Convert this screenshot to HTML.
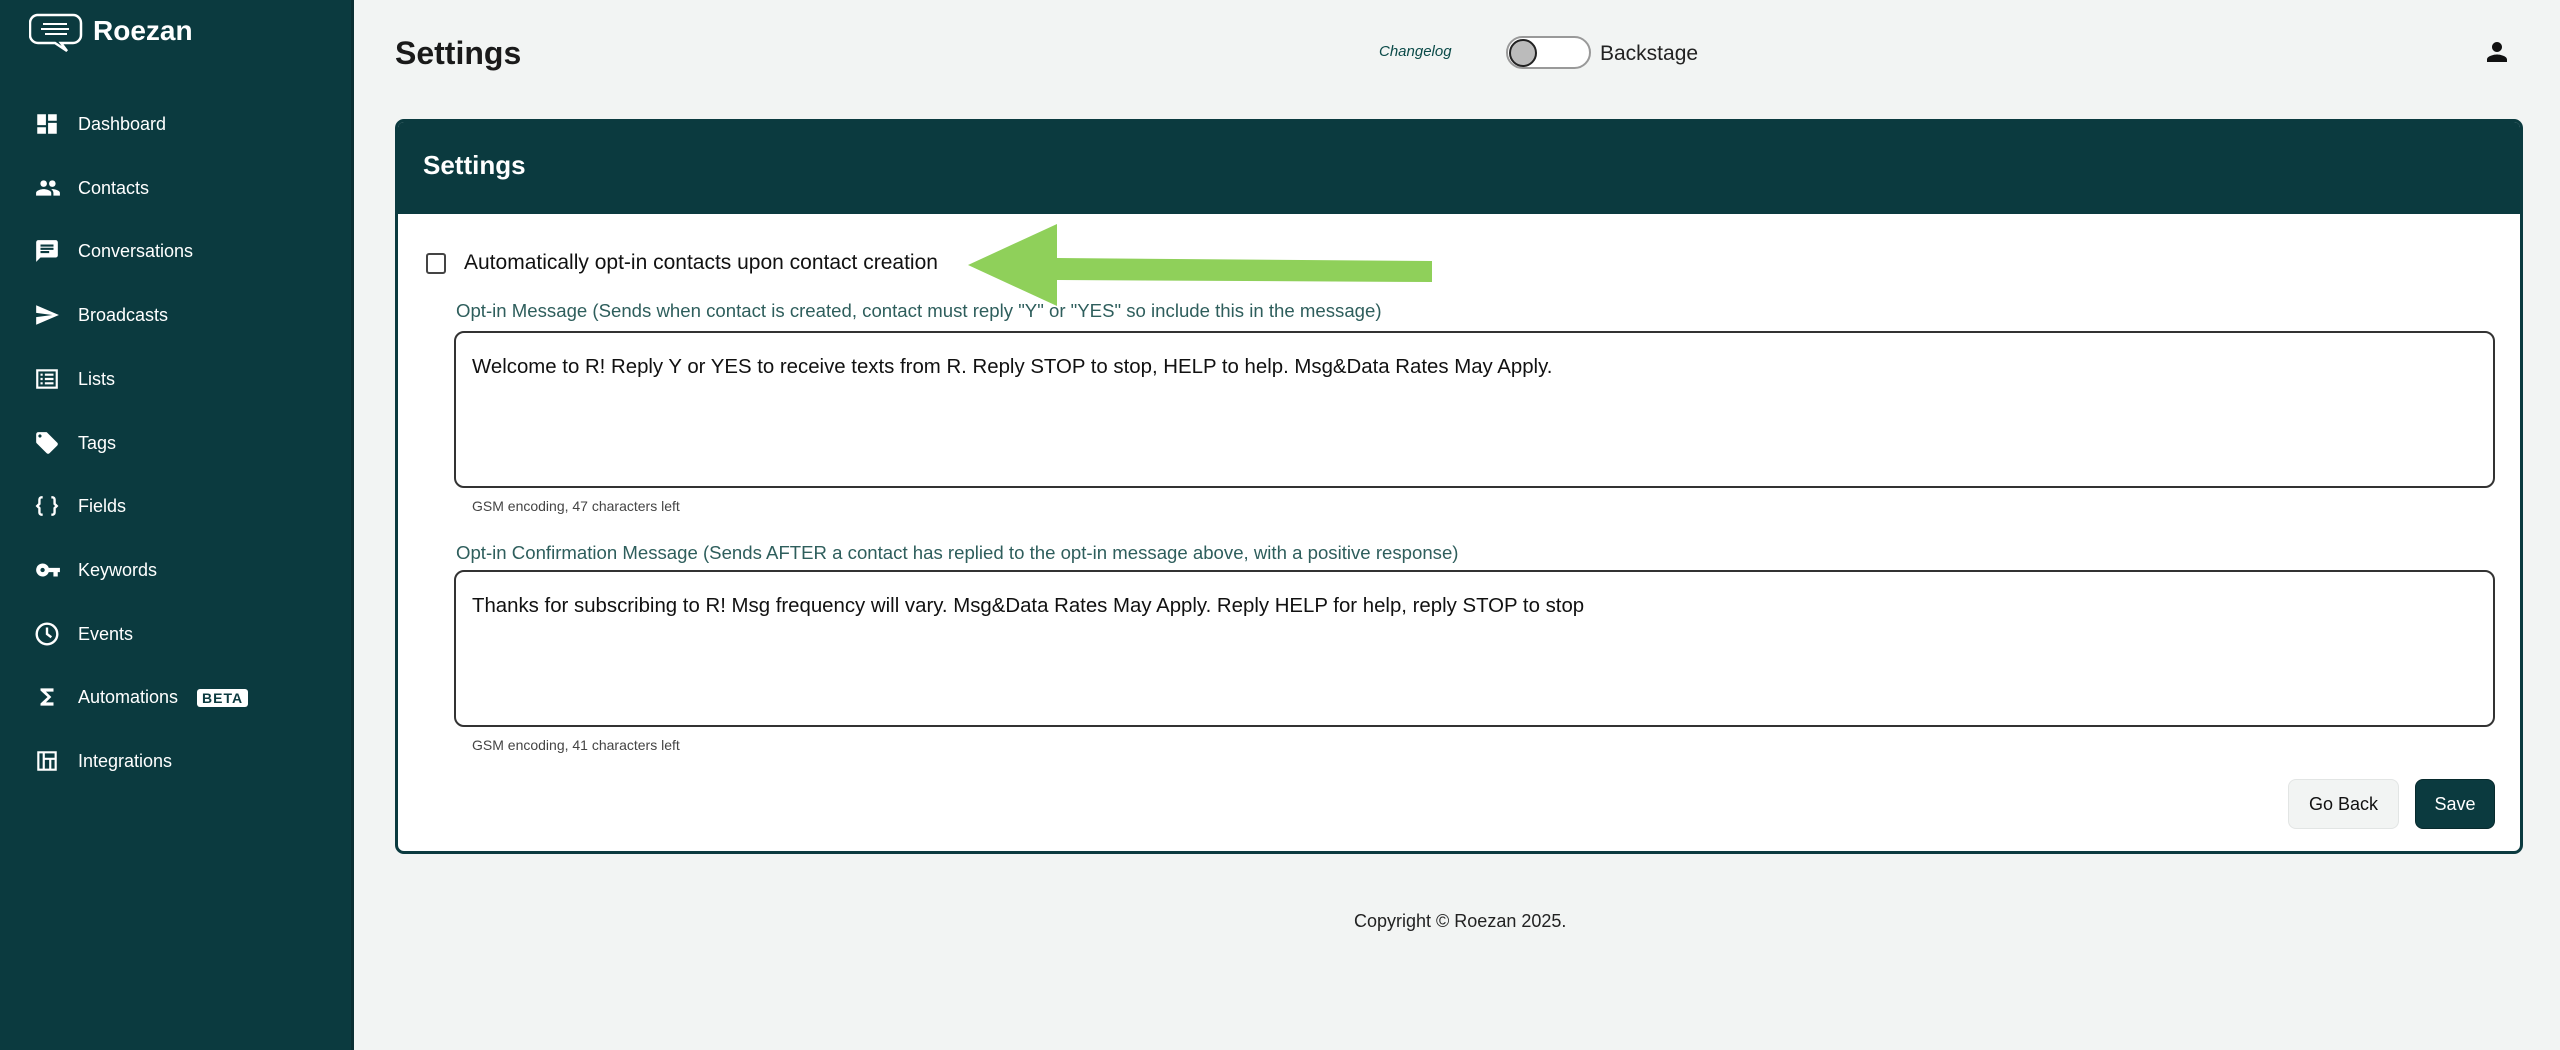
<!DOCTYPE html>
<html><head><meta charset="utf-8"><style>
*{box-sizing:border-box;margin:0;padding:0}
body{width:2560px;height:1050px;background:#f2f4f3;font-family:"Liberation Sans",sans-serif;position:relative;overflow:hidden;color:#111}
.sb{position:absolute;left:0;top:0;width:354px;height:1050px;background:#0b3a3f;border-right:3px solid #0a2f33}
.abs{position:absolute}
.nav{position:absolute;left:0;width:354px;height:40px;color:#fff;font-size:18px}
.nav svg{position:absolute;left:34px;top:7px}
.nav span{position:absolute;left:78px;top:10px}
.card{position:absolute;left:395px;top:119px;width:2128px;height:735px;border:3px solid #0b3a3f;border-radius:9px;background:#fff;overflow:hidden}
.ch{height:92px;background:#0b3a3f;color:#fff;font-size:26px;font-weight:bold;padding:28px 0 0 25px}
.ta{position:absolute;left:454px;width:2041px;height:157px;border:2px solid #333;border-radius:10px;background:#fff;font-size:20.4px;padding:23px 0 0 16px}
.lbl{position:absolute;left:456px;font-size:18.6px;color:#2e5e5c}
.gsm{position:absolute;left:472px;font-size:14px;color:#444}
</style></head><body>
<div class="sb">
 <svg class="abs" style="left:29px;top:12px" width="54" height="42" viewBox="0 0 54 42"><path d="M8 3h36a8 8 0 0 1 8 8v12a8 8 0 0 1-8 8H32l6 8-12-8H9a8 8 0 0 1-8-8V11a8 8 0 0 1 7-8z" fill="none" stroke="#fff" stroke-width="2.5"/><path d="M14 12h24M12 17h28M16 22h22" stroke="#fff" stroke-width="2"/></svg>
 <div class="abs" style="left:93px;top:15px;color:#fff;font-size:28px;font-weight:bold">Roezan</div>
 <div class="nav" style="top:104px"><svg width="26" height="26" viewBox="0 0 24 24" fill="#fff"><path d="M3 13h8V3H3zm0 8h8v-6H3zm10 0h8V11h-8zm0-18v6h8V3z"/></svg><span>Dashboard</span></div>
 <div class="nav" style="top:168px"><svg width="28" height="26" viewBox="0 0 24 24" fill="#fff"><path d="M16 11c1.7 0 3-1.3 3-3s-1.3-3-3-3-3 1.3-3 3 1.3 3 3 3zm-8 0c1.7 0 3-1.3 3-3S9.7 5 8 5 5 6.3 5 8s1.3 3 3 3zm0 2c-2.3 0-7 1.2-7 3.5V19h14v-2.5C15 14.2 10.3 13 8 13zm8 0c-.3 0-.6 0-1 .1 1.2.8 2 2 2 3.4V19h6v-2.5c0-2.300-4.7-3.5-7-3.5z"/></svg><span>Contacts</span></div>
 <div class="nav" style="top:231px"><svg width="26" height="26" viewBox="0 0 24 24" fill="#fff"><path d="M20 2H4c-1.1 0-2 .9-2 2v18l4-4h14c1.1 0 2-.9 2-2V4c0-1.1-.9-2-2-2zM6 9h12v2H6zm8 5H6v-2h8zm4-6H6V6h12z"/></svg><span>Conversations</span></div>
 <div class="nav" style="top:295px"><svg width="26" height="26" viewBox="0 0 24 24" fill="#fff"><path d="M2 21l21-9L2 3v7l15 2-15 2z"/></svg><span>Broadcasts</span></div>
 <div class="nav" style="top:359px"><svg width="26" height="26" viewBox="0 0 24 24" fill="none" stroke="#fff" stroke-width="2"><rect x="3" y="4" width="18" height="16"/><path d="M6 8h2M10 8h8M6 12h2M10 12h8M6 16h2M10 16h8"/></svg><span>Lists</span></div>
 <div class="nav" style="top:423px"><svg width="26" height="26" viewBox="0 0 24 24" fill="#fff"><path d="M21.4 11.6l-9-9C12.1 2.2 11.6 2 11 2H4c-1.1 0-2 .9-2 2v7c0 .6.2 1.1.6 1.4l9 9c.4.4.9.6 1.4.6s1-.2 1.4-.6l7-7c.4-.4.6-.9.6-1.4s-.2-1.1-.6-1.4zM5.5 7C4.7 7 4 6.3 4 5.5S4.7 4 5.5 4 7 4.7 7 5.5 6.3 7 5.5 7z"/></svg><span>Tags</span></div>
 <div class="nav" style="top:486px"><svg width="26" height="26" viewBox="0 0 24 24" fill="none" stroke="#fff" stroke-width="2.2"><path d="M8 4H7a2 2 0 0 0-2 2v4l-2 2 2 2v4a2 2 0 0 0 2 2h1M16 4h1a2 2 0 0 1 2 2v4l2 2-2 2v4a2 2 0 0 1-2 2h-1"/></svg><span>Fields</span></div>
 <div class="nav" style="top:550px"><svg width="28" height="26" viewBox="0 0 24 24" fill="#fff"><path d="M12.7 10A6 6 0 1 0 12.7 14H17v4h4v-4h2v-4zM7 14a2 2 0 1 1 0-4 2 2 0 0 1 0 4z"/></svg><span>Keywords</span></div>
 <div class="nav" style="top:614px"><svg width="26" height="26" viewBox="0 0 24 24" fill="none" stroke="#fff" stroke-width="2.2"><circle cx="12" cy="12" r="9.5"/><path d="M12 6v6l4 3"/></svg><span>Events</span></div>
 <div class="nav" style="top:677px"><svg width="26" height="26" viewBox="0 0 24 24" fill="#fff"><path d="M18 4H6v2l6.5 6L6 18v2h12v-3h-7l5-5-5-5h7z"/></svg><span>Automations</span><div class="abs" style="left:197px;top:12px;background:#fff;color:#0b3a3f;font-size:14px;font-weight:bold;padding:1px 5px;border-radius:3px;letter-spacing:1px">BETA</div></div>
 <div class="nav" style="top:741px"><svg width="26" height="26" viewBox="0 0 24 24" fill="#fff"><path d="M3 3h18v18H3zM5 5v14h3V5zm5 0v4h9V5zm0 6v8h4v-8zm6 0v8h3v-8z"/></svg><span>Integrations</span></div>
</div>

<div class="abs" style="left:395px;top:35px;font-size:32px;font-weight:bold;color:#1a1a1a">Settings</div>
<div class="abs" style="left:1379px;top:43px;font-size:15px;font-style:italic;color:#0b4a48">Changelog</div>
<div class="abs" style="left:1506px;top:36px;width:85px;height:33px;border:2px solid #999;border-radius:17px;background:#fff"><div class="abs" style="left:1px;top:1px;width:28px;height:28px;border-radius:50%;background:#bbb;border:2px solid #222"></div></div>
<div class="abs" style="left:1600px;top:42px;font-size:21px;color:#222">Backstage</div>
<svg class="abs" style="left:2482px;top:37px" width="30" height="30" viewBox="0 0 24 24" fill="#111"><path d="M12 12c2.2 0 4-1.8 4-4s-1.8-4-4-4-4 1.8-4 4 1.8 4 4 4zm0 2c-2.7 0-8 1.3-8 4v2h16v-2c0-2.7-5.3-4-8-4z"/></svg>

<div class="card"><div class="ch">Settings</div></div>
<div class="abs" style="left:426px;top:253px;width:20px;height:21px;border:2px solid #444;border-radius:3px;background:#fff"></div>
<div class="abs" style="left:464px;top:251px;font-size:21px;color:#111">Automatically opt-in contacts upon contact creation</div>
<div class="lbl" style="top:300px">Opt-in Message (Sends when contact is created, contact must reply "Y" or "YES" so include this in the message)</div>
<div class="ta" style="top:331px">Welcome to R! Reply Y or YES to receive texts from R. Reply STOP to stop, HELP to help. Msg&amp;Data Rates May Apply.</div>
<div class="gsm" style="top:498px">GSM encoding, 47 characters left</div>
<div class="lbl" style="top:542px">Opt-in Confirmation Message (Sends AFTER a contact has replied to the opt-in message above, with a positive response)</div>
<div class="ta" style="top:570px">Thanks for subscribing to R! Msg frequency will vary. Msg&amp;Data Rates May Apply. Reply HELP for help, reply STOP to stop</div>
<div class="gsm" style="top:737px">GSM encoding, 41 characters left</div>
<div class="abs" style="left:2288px;top:779px;width:111px;height:50px;background:#f2f4f3;border:1px solid #e2e5e4;border-radius:8px;font-size:18px;text-align:center;line-height:48px">Go Back</div>
<div class="abs" style="left:2415px;top:779px;width:80px;height:50px;background:#0b3a3f;border:1px solid #072a2d;border-radius:8px;font-size:18px;color:#fff;text-align:center;line-height:48px">Save</div>

<svg class="abs" style="left:960px;top:220px" width="480" height="90" viewBox="0 0 480 90"><path d="M8 45L97 4v34l375 3v21L97 60v26z" fill="#8fd05a"/></svg>

<div class="abs" style="left:1354px;top:911px;font-size:18px;color:#222">Copyright © Roezan 2025.</div>
</body></html>
